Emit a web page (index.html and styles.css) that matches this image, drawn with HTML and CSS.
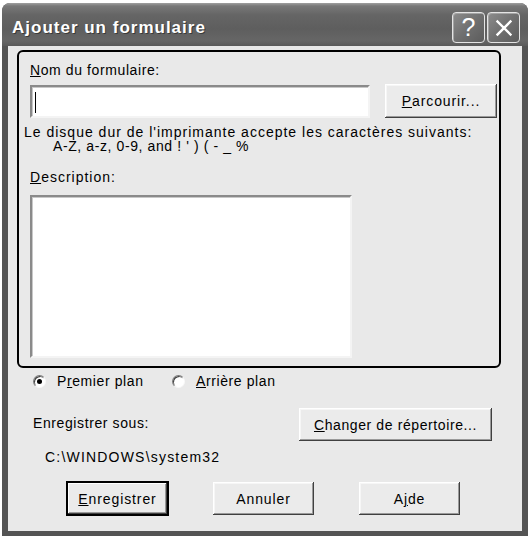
FILE: index.html
```html
<!DOCTYPE html>
<html>
<head>
<meta charset="utf-8">
<link rel="stylesheet" href="styles.css">
</head>
<body>
<div class="window">
  <div class="titlebar">
    <span class="title">Ajouter un formulaire</span>
    <div class="tb-buttons">
      <span class="tb-btn tb-help">?</span>
      <span class="tb-btn"><svg width="18" height="18" viewBox="0 0 18 18"><path d="M2.5 2.5 L15.5 15.5 M15.5 2.5 L2.5 15.5" stroke="#fff" stroke-width="2.4" stroke-linecap="square"/></svg></span>
    </div>
  </div>
  <div class="client">
    <div class="group">
      <div class="label"><u>N</u>om du formulaire:</div>
      <div class="name-row">
        <div class="field"><span class="caret"></span></div>
        <button class="btn btn-browse"><u>P</u>arcourir...</button>
      </div>
      <div class="hint">
        <div>Le disque dur de l'imprimante accepte les caractères suivants:</div>
        <div class="hint-chars">A-Z, a-z, 0-9, and ! ' ) ( - _ %</div>
      </div>
      <div class="label label-desc"><u>D</u>escription:</div>
      <div class="field textarea"></div>
    </div>
    <div class="radios">
      <label class="radio radio-1"><span class="radio-dot checked"></span>P<u>r</u>emier plan</label>
      <label class="radio"><span class="radio-dot"></span><u>A</u>rrière plan</label>
    </div>
    <div class="save-row">
      <span class="save-label">Enregistrer sous:</span>
      <button class="btn btn-dir"><u>C</u>hanger de répertoire...</button>
    </div>
    <div class="path">C:\WINDOWS\system32</div>
    <div class="actions">
      <button class="btn btn-action btn-default"><u>E</u>nregistrer</button>
      <button class="btn btn-action">Annuler</button>
      <button class="btn btn-action btn-help">A<u>j</u>de</button>
    </div>
  </div>
</div>
</body>
</html>
```

FILE: styles.css
```css
* { box-sizing: border-box; }
html, body { margin: 0; padding: 0; background: #ffffff; }
body {
  font-family: "Liberation Sans", Arial, sans-serif;
  font-size: 14px;
  letter-spacing: 0.6px;
  color: #000;
}
.window {
  width: 526px;
  height: 533px;
  margin: 3px 0 0 2px;
  background: #545454;
  border-radius: 8px 8px 0 0;
  display: flex;
  flex-direction: column;
  overflow: hidden;
}
.titlebar {
  height: 43px;
  flex: none;
  display: flex;
  align-items: flex-start;
  justify-content: space-between;
  padding: 0 8px 0 10px;
  background: linear-gradient(#a0a0a0 0, #787878 3px, #656565 12px, #5e5e5e 60%, #666666 88%, #5a5a5a 100%);
}
.title {
  color: #fff;
  font-family: "Liberation Sans", sans-serif;
  font-weight: bold;
  font-size: 17px;
  letter-spacing: 1px;
  line-height: 20px;
  text-shadow: 1px 1px 0 #3a3a3a;
  padding-top: 15px;
}
.tb-buttons { display: flex; gap: 2px; padding-top: 9px; }
.tb-btn {
  width: 33px;
  height: 31px;
  border: 1px solid #e4e4e4;
  border-radius: 4px;
  background: linear-gradient(135deg, #8c8c8c 0%, #707070 50%, #5c5c5c 100%);
  display: flex;
  align-items: center;
  justify-content: center;
  color: #fff;
  font-family: "Liberation Sans", sans-serif;
  font-size: 25px;
  letter-spacing: 0;
  box-shadow: inset 1px 1px 0 #a4a4a4;
}
.client {
  flex: 1;
  margin: 0 6px 5px 6px;
  background: #e9e9e9;
  padding: 4px 0 0 9px;
}
.group {
  width: 484px;
  height: 318px;
  border: 2px solid #000;
  border-radius: 6px;
  padding: 10px 0 0 11px;
}
.label { line-height: 16px; height: 16px; }
.name-row {
  display: flex;
  align-items: center;
  margin-top: 6px;
  gap: 15px;
}
.field {
  background: #fff;
  border-style: solid;
  border-width: 2px;
  border-color: #8a8a8a #f4f4f4 #f4f4f4 #8a8a8a;
  box-shadow: inset 1px 1px 0 #c8c8c8;
}
.name-row .field {
  width: 340px;
  height: 33px;
  padding: 5px 0 0 3px;
}
.caret {
  display: block;
  width: 1px;
  height: 21px;
  background: #000;
}
.btn {
  font-family: "Liberation Sans", Arial, sans-serif;
  font-size: 14px;
  letter-spacing: 0.6px;
  color: #000;
  background: #ebebeb;
  border: none;
  padding: 0;
  box-shadow: inset -1px -1px 0 #404040, inset 1px 1px 0 #ffffff, inset -2px -2px 0 #9a9a9a, inset 2px 2px 0 #f6f6f6;
}
.btn-browse { width: 112px; height: 34px; letter-spacing: 0.9px; }
.hint {
  margin: 7px 0 0 -6px;
  line-height: 14px;
  letter-spacing: 1px;
}
.hint-chars { padding-left: 29px; letter-spacing: 0.6px; }
.label-desc { margin-top: 16px; letter-spacing: 1px; }
.textarea {
  margin-top: 10px;
  width: 322px;
  height: 163px;
}
.radios {
  display: flex;
  align-items: center;
  height: 16px;
  margin: 5px 0 0 16px;
}
.radio { display: flex; align-items: center; }
.radio-1 { width: 139px; }
.radio-dot {
  flex: none;
  width: 13px;
  height: 13px;
  border-radius: 50%;
  background: #fff;
  border: 1px solid;
  border-color: #7a7a7a #f8f8f8 #f8f8f8 #7a7a7a;
  box-shadow: inset 1px 1px 0 #404040;
  margin-right: 11px;
  position: relative;
}
.radio-dot.checked::after {
  content: "";
  position: absolute;
  left: 3px;
  top: 3px;
  width: 5px;
  height: 5px;
  border-radius: 50%;
  background: #000;
}
.save-row {
  display: flex;
  align-items: center;
  justify-content: space-between;
  width: 459px;
  margin: 19px 0 0 16px;
}
.save-label { position: relative; top: -2px; }
.btn-dir { width: 193px; height: 33px; }
.path {
  margin: 8px 0 0 28px;
  line-height: 16px;
  letter-spacing: 1.2px;
}
.actions {
  display: flex;
  margin: 17px 0 0 50px;
  gap: 45px;
}
.btn-action { width: 101px; height: 33px; letter-spacing: 0.9px; }
.btn-default { border: 1px solid #000; box-shadow: inset -1px -1px 0 #404040, inset 1px 1px 0 #ffffff, inset -2px -2px 0 #9a9a9a; outline: 1px solid #000; }
```
